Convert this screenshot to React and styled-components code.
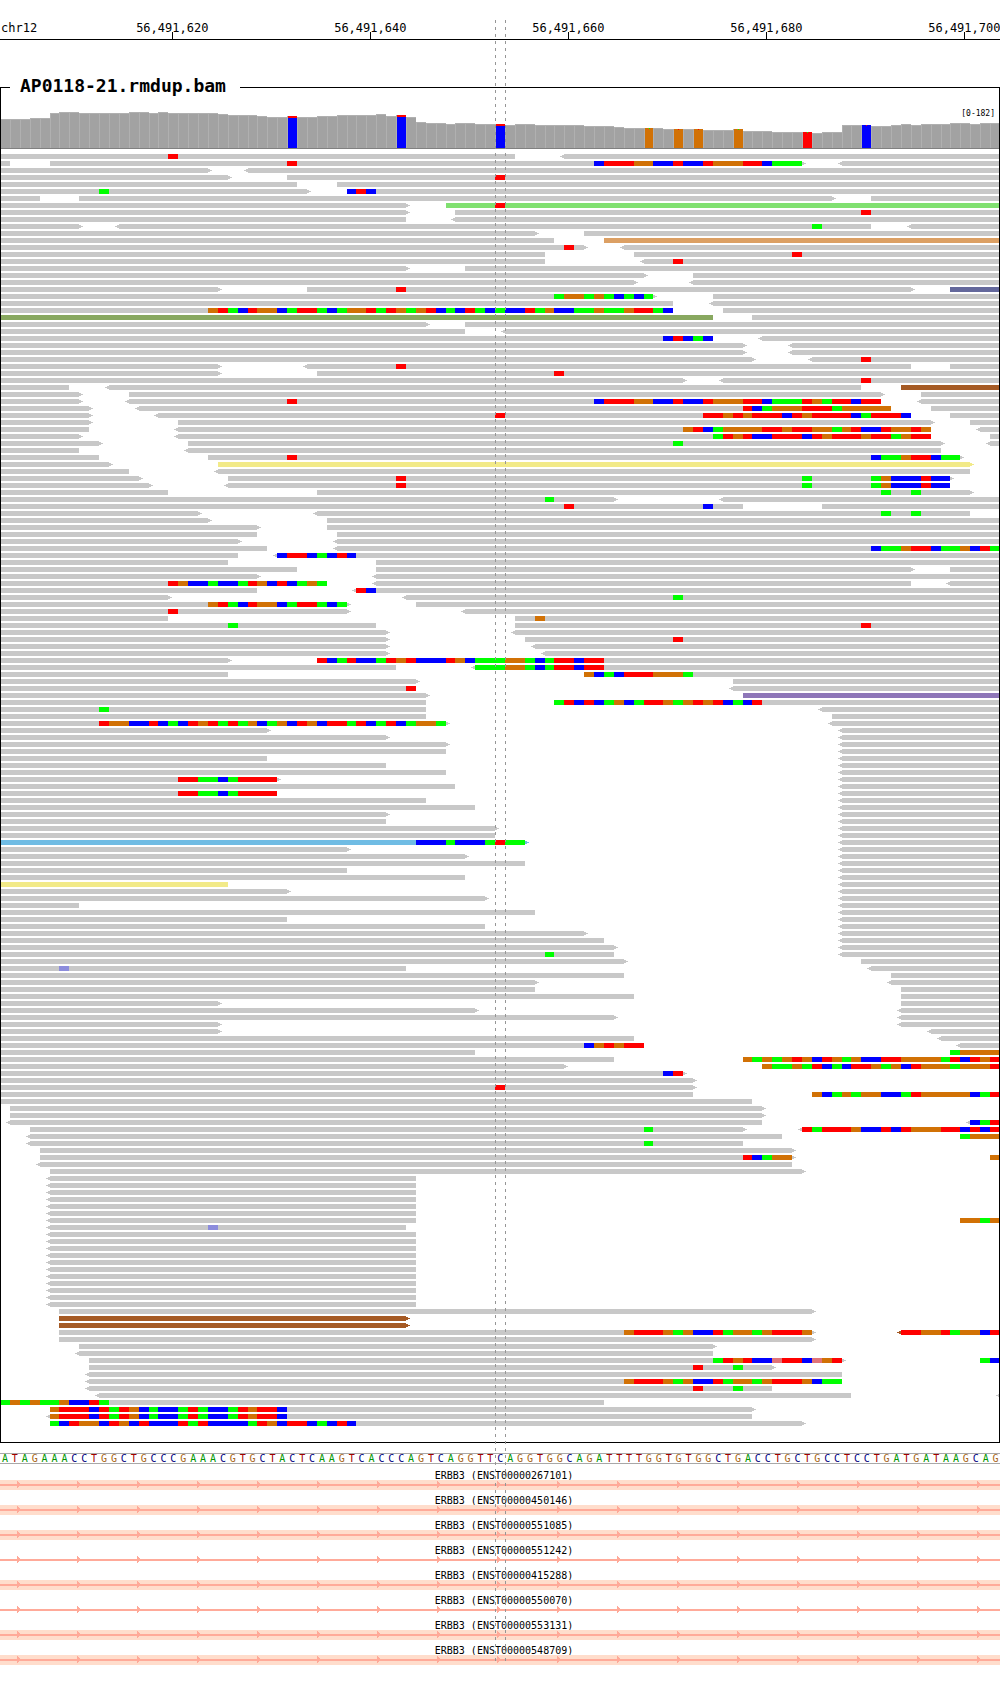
import React from "react";
import styled, { createGlobalStyle } from "styled-components";

const BASES = 101;
const REGION_START = 56491603;
const FOCUS_BASE = 50;
const ROW_PITCH = 7;
const READ_HEIGHT = 5;

const READ_COLORS = {
  plain: "#c8c8c8",
  mint: "#80e070",
  tan: "#dca064",
  slate: "#64689c",
  olive: "#88a860",
  brown: "#a55a24",
  yellow: "#f2ea88",
  violet: "#8e76b8",
  sky: "#70bce4",
};

// Lower-case letters are low-quality base calls.
const BASE_COLORS = {
  A: "#00ff00",
  C: "#0000ff",
  G: "#d17105",
  T: "#ff0000",
  c: "#8c8cdc",
  t: "#e07478",
};

const LETTER_COLORS = { A: "#009600", C: "#000080", G: "#a86414", T: "#a00000" };

const SEQUENCE =
  "ATAGAAACCTGGCTGCCCGAAACGTGCTACTCAAGTCACCCAGTCAGGTTCAGGTGGCAGATTTTGGTGTGGCTGACCTGCTGCCTCCTGATGATAAGCAG";

const TRANSCRIPTS = [
  { id: "ENST00000267101", exon: true },
  { id: "ENST00000450146", exon: true },
  { id: "ENST00000551085", exon: true },
  { id: "ENST00000551242", exon: false },
  { id: "ENST00000415288", exon: true },
  { id: "ENST00000550070", exon: false },
  { id: "ENST00000553131", exon: true },
  { id: "ENST00000548709", exon: true },
];

// [number of bases, bar height in pixels]
const COVERAGE_RUNS = [
  [3, 29], [2, 30], [1, 35], [2, 36], [5, 35], [2, 36], [1, 35], [1, 36],
  [5, 35], [1, 34], [3, 33], [1, 32], [2, 31], [1, 32], [2, 31], [2, 32],
  [4, 33], [1, 34], [1, 32], [1, 33], [1, 31], [1, 26], [2, 25], [1, 24],
  [2, 25], [2, 24], [1, 24], [1, 23], [2, 24], [5, 23], [3, 22], [1, 21],
  [4, 20], [4, 19], [3, 18], [1, 19], [3, 17], [4, 16], [1, 15], [2, 16],
  [3, 23], [2, 22], [1, 23], [1, 24], [1, 23], [3, 24], [2, 25], [1, 24],
  [2, 25],
];
const COVERAGE = COVERAGE_RUNS.flatMap(([n, h]) => Array(n).fill(h));

// Variant columns: the main base, the base on top, and how the top is drawn.
const VARIANTS = {
  29: { base: "C", top: "T", cap: true },
  40: { base: "C", top: "T", cap: true },
  50: { base: "C", top: "T", cap: true },
  65: { base: "G", top: "A" },
  68: { base: "G", top: "T" },
  70: { base: "G", top: "T" },
  74: { base: "G", top: "A" },
  81: { base: "T", top: "A" },
  87: { base: "C", top: "T" },
};

// One line per row. "a-b" is a read from base a up to base b (open = region end),
// "<" and ">" mark its strand arrow, "/name" its colour, "i:SEQ" mismatches from i.
const ROWS = `0-52 17:T <57-
0-1 5-81> 29:T 60:CTTTGGCCTCCTGGGTTCAAA <85-
0-21> <25-
0-23> 29- 50:T
0-30 34-
0-31> 10:A 35- 35:CTC
0-4 8-84> 88-
0-41> 45-/mint 50:T
0-41> 46- 87:T
0-41 <46-
0-8> <12-88 82:A <92-
0-54> 59-
0-56 61-/tan
0-59> 57:T <63-
0-55 64- 80:T
0-55 <65- 68:T
0-41> 47-
0-65> 70-
0-64> <70-
0-22> 31-92> 40:T 96-/slate
0-66> 56:AGGAGACACA 72-
0-68 <72-
0-68 21:GTACTGGCATTACAGGTATGAGTCACTACACCTAGCCAAGAAGTTAC 73-
0-72/olive 76-
0-43> 47-
0-47 <51-
0-72 67:CTCAC <77-
0-75> <80-
0-75> <80-
0-76> <82- 87:T
0-22> <31-92 40:T 96-
0-22> 32- 56:T
0-69> <73- 87:T
0-7 <11-87 91-/brown
0-8> 13-89> 93-
0-8> <13-89 29:T 60:CTTTGGCCTCCTGGGTTCAAATGATTCTT <93-
0-9> <14-90 75:TCAGGGTTTAGGGGG 94-
0-9> <16-92 50:T 71:TTGTGTTTCTGTTTTCATTTC 96-
0-9> 18-94> 98-
0-9 <18-94 69:GTCAGGGGTTGTTGGAGTCCTGGTG <99-
0-8> <18-94 72:ATGTCCTTTCTGTTTGTTAGTT 100-
0-10> 19-95> 68:A <100-
0-8 <19-95
0-10 21-97> 29:T 88:CAAGTTCAA
0-11> 22-98>/yellow
0-13 <22-98
0-14> 23-96> 40:T 81:A 88:AGCCCTCC
0-15> <23-96 40:T 81:A 88:AGCCCTCC
0-17 32-98> 89:A 92:A
0-62> 55:A <73-
0-75 57:T 71:C 83-
0-20> <32-98 89:A 92:A
0-21> 33-
0-26> 33-
0-26 34-
0-24> <34-
0-27 <34- 88:CAAGTTCAAGCTA
0-24 <28- 28:CTTCACTC
0-23 38-
0-30 38-92> 96-
0-26> <38-
0-33 17:TGCCACCATGCTCAGA <38-92 <96-
0-26 <36- 36:TC
0-17> <41- 68:A
0-35> 21:GTACTGGCATTACA 42-
0-35> 17:T <47-
0-17 52- 54:G
0-38 23:A 52- 87:T
0-39> <52-
0-39> 53- 68:T
0-39> <54-
0-39> <55-
0-23> 32- 32:TCATCCATGTCCCTGCAAAGGACATTCTT
0-40 <48- 48:AAAGGACATTCTT
0-23 59- 59:GCACTTTGGGA
0-42> 74-
0-42 41:T <74-
0-43> 75-/violet
0-43 56- 56:ATCTCAGCATTGAGTGTCACT
0-43 10:A <83-
0-43 84-
0-45> 10:TGGCCTCACTGTATAGCAGCTGCTTATCATCAGGA <84-
0-27> <85-
0-39> <85-
0-45> <85-
0-45 <85-
0-27 <85-
0-39 <85-
0-45 <85-
0-28> 18:TTAACATTTT <85-
0-46 <85-
0-28 18:TTAACATTTT <85-
0-43 <85-
0-48 <85-
0-39> <85-
0-39 <85-
0-50> <85-
0-50 <85-
0-53>/sky 42:CCCACCCATAA <85-
0-35> <85-
0-47> <85-
0-53 <85-
0-35 <85-
0-47 <85-
0-23/yellow <85-
0-29> <85-
0-49> <85-
0-8 <85-
0-54 <85-
0-29 <85-
0-49 <85-
0-59> <85-
0-61 <85-
0-62> <85-
0-62 55:A <85-
0-63> 87-
0-41 6:c <88-
0-63 90-
0-54> <90-
0-54 91-
0-64 91-
0-22> 91-
0-48> <91-
0-62> <91-
0-22> <91-
0-22> <94-
0-64 <95-
0-65 59:CGTGTT <97-
0-48 96- 96:AGGGG
0-62 75- 75:GAGAGTGCTGAGCCTTGGGGATCTGT
0-57> 77- 77:GAAGATCACTTGAGCTGGGAGGGT
0-69> 67:CT
0-70>
0-70> 50:T
0-70 82- 82:GCAGAGGCCATGGGGGCAT
0-76
1-77>
1-77>
<1-77 <98- 98:CAT
3-75> 65:A <81- 81:TATTTGCCTCTGGGTTCTCT
<3-79 97- 97:AGGG
<3-75 65:A
4-80>
4-80> 75:TCAGG 100- 100:G
<4-80
5-81>
<5-42
<5-42
<5-42
<5-42
<5-42
<5-42
<5-42 97- 97:GGAG
<5-41 21:c
<5-42
<5-42
<5-42
<5-42
<5-42
<5-42
<5-42
<5-42
<5-42
<5-42
<5-42
6-82>
6-41>/brown
6-41>/brown
6-82> 63:GTTTGAGCCTAGGAGTTTG <91-/brown 91:TTGGTAGGCT
6-82>
8-72>
<8-72
9-85> 72:ATGTCCtTTCtGT 99- 99:AC
9-78> 70:T 74:A
<9-85
<9-85 63:GTTTGAGCCTAGGAGTTTGCAA
<9-78 70:T 74:A
<10-86 <101-
0-61 0:AGAGAAGCCTA
5-76> 5:GTTTCTATGCACCATACCATGTTC
<5-76 5:GTTTCTATGCACCATACCATGTTC
5-81> 5:ACTGGCTGCTCCCTATCCCCATGCTTCACTC`
  .split("\n")
  .map((line) => {
    const reads = [];
    const calls = [];
    line.split(" ").forEach((token) => {
      const read = token.match(/^(<?)(\d+)-(\d*)(>?)(?:\/(\w+))?$/);
      if (read) {
        reads.push({
          from: Number(read[2]),
          to: read[3] ? Number(read[3]) : BASES,
          left: read[1] === "<",
          right: read[4] === ">",
          color: READ_COLORS[read[5] || "plain"],
        });
        return;
      }
      const [at, letters] = token.split(":");
      letters.replace(/(.)\1*/g, (run, base, offset) => {
        calls.push({ from: Number(at) + offset, span: run.length, base });
        return run;
      });
    });
    return { reads, calls };
  });

const pct = (bases) => `${(bases / BASES) * 100}%`;

const GlobalStyle = createGlobalStyle`
  body {
    margin: 0;
    background: #ffffff;
    color: #000000;
    font-family: "DejaVu Sans Mono", "Liberation Mono", monospace;
  }
`;

const Browser = styled.main`
  position: relative;
  padding-bottom: 20px;
  overflow: hidden;
`;

const RulerBar = styled.svg`
  display: block;
  width: 100%;
  height: 40px;
  font-size: 12px;
`;

const Track = styled.section`
  display: flow-root;
  position: relative;
  margin-top: 47px;
  padding-bottom: 15px;

  &::after {
    content: "";
    position: absolute;
    inset: 0;
    border: 1px solid #000000;
    pointer-events: none;
  }
`;

const TrackTitle = styled.h1`
  position: relative;
  z-index: 1;
  width: fit-content;
  margin: -11px 0 0 10px;
  padding: 0 14px 1px 10px;
  background: #ffffff;
  font-size: 18px;
  font-weight: bold;
  line-height: 20px;
`;

const CoverageTrack = styled.div`
  position: relative;
`;

const CoverageRange = styled.span`
  position: absolute;
  top: 11px;
  right: 5px;
  font-size: 8px;
  line-height: 12px;
`;

const CoverageChart = styled.svg`
  display: block;
  width: 100%;
  height: 52px;
`;

const ReadsChart = styled.svg`
  display: block;
  width: 100%;
  margin-top: 5px;
`;

const SequenceStrip = styled.div`
  display: flex;
  margin-top: 10px;
  border: solid #a8a8a8;
  border-width: 1px 0;
`;

const SequenceBase = styled.span`
  flex: 1 1 0;
  min-width: 0;
  height: 9px;
  color: ${(p) => LETTER_COLORS[p.$base]};
  font-size: 10px;
  line-height: 9px;
  text-align: center;
`;

const Transcripts = styled.ul`
  margin: 1px 0 0;
  padding: 0;
  list-style: none;
`;

const Transcript = styled.li`
  display: flex;
  flex-direction: column;
`;

const TranscriptLabel = styled.span`
  box-sizing: border-box;
  height: 15px;
  padding: 6px 0 0 8px;
  font-size: 10px;
  line-height: 10px;
  text-align: center;
`;

const TranscriptBand = styled.svg`
  display: block;
  width: 100%;
  height: 10px;
  background: ${(p) => (p.$exon ? "#ffddcc" : "transparent")};
`;

const Guide = styled.div`
  position: absolute;
  top: 20px;
  bottom: 22px;
  width: 1px;
  background: repeating-linear-gradient(#969696 0 3px, transparent 3px 7px);
  pointer-events: none;
`;

function Ruler() {
  return (
    <RulerBar role="img" aria-label="Genomic position ruler">
      <text x="1" y="32">chr12</text>
      {[620, 640, 660, 680, 700].map((n) => {
        const position = 56491000 + n;
        const x = pct(position - REGION_START + 0.4);
        return (
          <g key={n} shapeRendering="crispEdges">
            <text x={x} y="32" textAnchor="middle">
              {position.toLocaleString("en-US")}
            </text>
            <rect x={x} y="32" width="1" height="7" />
          </g>
        );
      })}
      <rect x="0" y="39" width="100%" height="1" />
    </RulerBar>
  );
}

function CoverageColumn({ index, height }) {
  const variant = VARIANTS[index];
  const y = 51 - height;
  const inner = {
    x: `calc(${pct(index)} + 1px)`,
    width: `calc(${pct(1)} - 1px)`,
  };
  return (
    <g>
      <rect x={pct(index)} y={y} width={pct(1)} height={height} fill="#b0b0b0" />
      {!variant && <rect style={inner} y={y + 1} height={height - 1} fill="#a2a2a2" />}
      {variant && <rect style={inner} y={y} height={height} fill={BASE_COLORS[variant.base]} />}
      {variant && variant.cap && (
        <rect style={inner} y={y} height="2" fill={BASE_COLORS[variant.top]} />
      )}
      {variant && !variant.cap && (
        <rect x={pct(index + 0.5)} y={y} width="1" height="1" fill={BASE_COLORS[variant.top]} />
      )}
    </g>
  );
}

function Arrow({ at, y, color, left }) {
  return (
    <svg x={pct(at)} y={y} width="4" height={READ_HEIGHT} overflow="visible">
      <rect x={left ? -2 : 0} y="1" width="2" height="3" fill={color} />
      <rect x={left ? -4 : 2} y="2" width="2" height="1" fill={color} />
    </svg>
  );
}

function ReadRow({ row, y }) {
  return (
    <g>
      {row.reads.map((read) => (
        <g key={read.from}>
          <rect
            x={pct(read.from)}
            y={y}
            width={pct(read.to - read.from)}
            height={READ_HEIGHT}
            fill={read.color}
          />
          {read.left && <Arrow at={read.from} y={y} color={read.color} left />}
          {read.right && <Arrow at={read.to} y={y} color={read.color} />}
        </g>
      ))}
      {row.calls.map((call) => (
        <rect
          key={call.from}
          x={pct(call.from)}
          y={y}
          width={pct(call.span)}
          height={READ_HEIGHT}
          fill={BASE_COLORS[call.base]}
        />
      ))}
    </g>
  );
}

function TranscriptRow({ id, exon }) {
  return (
    <Transcript>
      <TranscriptLabel>ERBB3 ({id})</TranscriptLabel>
      <TranscriptBand $exon={exon} shapeRendering="crispEdges" aria-hidden="true">
        <defs>
          <pattern id={`strand-${id}`} width="60" height="10" patternUnits="userSpaceOnUse">
            <path d="M17 1h1v1h1v1h1v3h-1v1h-1v1h-1z" fill="#ffaa99" />
          </pattern>
        </defs>
        <rect y="4" width="100%" height="2" fill="#ffaa99" />
        <rect width="100%" height="10" fill={`url(#strand-${id})`} />
      </TranscriptBand>
    </Transcript>
  );
}

export default function App() {
  return (
    <>
      <GlobalStyle />
      <Browser>
        <Ruler />
        <Track>
          <TrackTitle>AP0118-21.rmdup.bam</TrackTitle>
          <CoverageTrack>
            <CoverageRange>[0-182]</CoverageRange>
            <CoverageChart shapeRendering="crispEdges" role="img" aria-label="Read coverage">
              {COVERAGE.map((height, index) => (
                <CoverageColumn key={index} index={index} height={height} />
              ))}
              <rect y="51" width="100%" height="1" fill="#808080" />
            </CoverageChart>
          </CoverageTrack>
          <ReadsChart
            height={ROWS.length * ROW_PITCH}
            shapeRendering="crispEdges"
            role="img"
            aria-label="Aligned reads"
          >
            {ROWS.map((row, index) => (
              <ReadRow key={index} row={row} y={index * ROW_PITCH} />
            ))}
          </ReadsChart>
        </Track>
        <SequenceStrip>
          {SEQUENCE.split("").map((base, index) => (
            <SequenceBase key={index} $base={base}>{base}</SequenceBase>
          ))}
        </SequenceStrip>
        <Transcripts>
          {TRANSCRIPTS.map((transcript) => (
            <TranscriptRow key={transcript.id} {...transcript} />
          ))}
        </Transcripts>
        <Guide style={{ left: pct(FOCUS_BASE) }} />
        <Guide style={{ left: pct(FOCUS_BASE + 1) }} />
      </Browser>
    </>
  );
}
